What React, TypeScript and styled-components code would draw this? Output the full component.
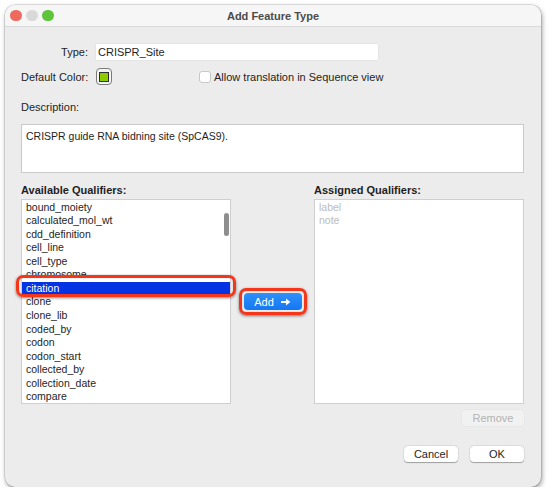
import styled, { createGlobalStyle, css } from "styled-components";

const GlobalStyle = createGlobalStyle`
  html, body {
    margin: 0;
    padding: 0;
    background: #ffffff;
  }
  body {
    font-family: "Liberation Sans", Arial, sans-serif;
    font-size: 11px;
    color: #1e1e1e;
  }
`;

const availableQualifiers = [
  "bound_moiety",
  "calculated_mol_wt",
  "cdd_definition",
  "cell_line",
  "cell_type",
  "chromosome",
  "citation",
  "clone",
  "clone_lib",
  "coded_by",
  "codon",
  "codon_start",
  "collected_by",
  "collection_date",
  "compare",
];

const assignedQualifiers = ["label", "note"];

const SELECTED = "citation";

export default function App() {
  return (
    <Page>
      <GlobalStyle />
      <Window>
        <TitleBar>
          <Lights>
            <Light $color="#ee6a5e" />
            <Light $color="#d9d9d9" />
            <Light $color="#5ec43a" />
          </Lights>
          <Title>Add Feature Type</Title>
          <span />
        </TitleBar>

        <Body>
          <FormRow>
            <FieldLabel>Type:</FieldLabel>
            <TypeField>CRISPR_Site</TypeField>
          </FormRow>

          <FormRow $gap={8}>
            <FieldLabel>Default Color:</FieldLabel>
            <ColorWell>
              <Swatch $color="#8ccc00" />
            </ColorWell>
            <CheckOption>
              <CheckBox />
              <span>Allow translation in Sequence view</span>
            </CheckOption>
          </FormRow>

          <SectionLabel $top={16}>Description:</SectionLabel>
          <DescriptionBox>CRISPR guide RNA bidning site (SpCAS9).</DescriptionBox>

          <QualifierGrid>
            <SectionLabel $bold>Available Qualifiers:</SectionLabel>
            <span />
            <SectionLabel $bold>Assigned Qualifiers:</SectionLabel>

            <ListBox>
              {availableQualifiers.map((q) => (
                <ListRow key={q} $selected={q === SELECTED}>
                  {q}
                </ListRow>
              ))}
              <ScrollThumb />
            </ListBox>

            <MiddleColumn>
              <AddButton>
                Add
                <svg width="10" height="8" viewBox="0 0 10 8">
                  <path d="M0 3.1h5.6v1.8H0z M5 0.4 L9.4 4 L5 7.6z" fill="#ffffff" />
                </svg>
              </AddButton>
            </MiddleColumn>

            <ListBox>
              {assignedQualifiers.map((q) => (
                <ListRow key={q} $muted>
                  {q}
                </ListRow>
              ))}
            </ListBox>
          </QualifierGrid>

          <ButtonRow $top={6}>
            <DialogButton $disabled $width={62}>
              Remove
            </DialogButton>
          </ButtonRow>

          <ButtonRow $top={20}>
            <DialogButton $width={54}>Cancel</DialogButton>
            <DialogButton $width={54}>OK</DialogButton>
          </ButtonRow>
        </Body>
      </Window>
    </Page>
  );
}

// red highlight frame drawn around the parts the dialog points out
const callout = css`
  &::after {
    content: "";
    position: absolute;
    border: 3px solid #f4361b;
    border-radius: 7px;
    box-shadow: 0 1px 3px rgba(0, 0, 0, 0.5), inset 0 0 1px rgba(0, 0, 0, 0.35);
    pointer-events: none;
  }
`;

const Page = styled.div`
  padding: 5px 0 0 5px;
`;

const Window = styled.div`
  width: 536px;
  height: 482px;
  background: #ececec;
  border-radius: 10px;
  box-shadow: 0 0 0 0.5px rgba(0, 0, 0, 0.2), 1px 2px 5px rgba(0, 0, 0, 0.4);
  display: flex;
  flex-direction: column;
`;

const TitleBar = styled.div`
  height: 21px;
  border-bottom: 1px solid #d9d9d9;
  background: #f6f6f6;
  border-radius: 10px 10px 0 0;
  display: grid;
  grid-template-columns: 1fr auto 1fr;
  align-items: center;
`;

const Lights = styled.div`
  display: flex;
  gap: 4.5px;
  padding-left: 5px;
`;

const Light = styled.span<{ $color: string }>`
  width: 11.5px;
  height: 11.5px;
  border-radius: 50%;
  background: ${(p) => p.$color};
`;

const Title = styled.div`
  font-weight: bold;
  font-size: 11px;
  color: #4b4b4b;
`;

const Body = styled.div`
  flex: 1;
  display: flex;
  flex-direction: column;
  padding: 17px 17px 0 16px;
`;

const FormRow = styled.div<{ $gap?: number }>`
  display: flex;
  align-items: center;
  gap: 8px;
  margin-top: ${(p) => p.$gap ?? 0}px;
`;

const FieldLabel = styled.div`
  width: 67px;
  text-align: right;
  white-space: nowrap;
`;

const TypeField = styled.div`
  width: 282px;
  height: 16px;
  box-sizing: border-box;
  padding: 0 2px;
  background: #ffffff;
  display: flex;
  align-items: center;
  box-shadow: 0 0 0 0.5px rgba(0, 0, 0, 0.06);
`;

const ColorWell = styled.div`
  width: 16px;
  height: 17px;
  box-sizing: border-box;
  border: 1px solid #7b7b7b;
  border-radius: 4px;
  background: #f4f4f4;
  display: flex;
  align-items: center;
  justify-content: center;
`;

const Swatch = styled.div<{ $color: string }>`
  width: 10px;
  height: 10px;
  box-sizing: border-box;
  border: 1px solid #2e2e2e;
  background: ${(p) => p.$color};
`;

const CheckOption = styled.label`
  display: flex;
  align-items: center;
  gap: 3px;
  margin-left: 79px;
`;

const CheckBox = styled.span`
  width: 12px;
  height: 12px;
  box-sizing: border-box;
  border: 1px solid #c8c8c8;
  border-radius: 3px;
  background: #ffffff;
`;

const SectionLabel = styled.div<{ $bold?: boolean; $top?: number }>`
  line-height: 13px;
  margin-top: ${(p) => p.$top ?? 0}px;
  font-weight: ${(p) => (p.$bold ? "bold" : "normal")};
`;

const DescriptionBox = styled.div`
  margin-top: 10px;
  height: 49px;
  box-sizing: border-box;
  padding: 5px 4px;
  font-size: 10.5px;
  line-height: 13px;
  background: #ffffff;
  border: 1px solid #cacaca;
`;

const QualifierGrid = styled.div`
  margin-top: 11px;
  display: grid;
  grid-template-columns: 210px 83px 210px;
  grid-template-rows: 13px 205px;
  row-gap: 2px;
`;

const ListBox = styled.div`
  position: relative;
  box-sizing: border-box;
  padding-top: 0.5px;
  background: #ffffff;
  border: 1px solid #cfcfcf;
`;

const ListRow = styled.div<{ $selected?: boolean; $muted?: boolean }>`
  height: 13.57px;
  line-height: 13.57px;
  padding-left: 4px;
  font-size: 10.5px;
  white-space: nowrap;
  color: ${(p) => (p.$muted ? "#bcbcbc" : "#1e1e1e")};

  ${(p) =>
    p.$selected &&
    css`
      position: relative;
      z-index: 1;
      background: #0433e4;
      color: #ffffff;
      ${callout}
      &::after {
        top: -7px;
        right: -6px;
        bottom: -2px;
        left: -6px;
      }
    `}
`;

const ScrollThumb = styled.div`
  position: absolute;
  top: 13px;
  right: 1.5px;
  width: 4.5px;
  height: 23px;
  border-radius: 3px;
  background: #8e8e8e;
`;

const MiddleColumn = styled.div`
  display: flex;
  align-items: center;
  justify-content: center;
`;

const AddButton = styled.button`
  position: relative;
  width: 58px;
  height: 17px;
  padding: 0;
  border: none;
  border-radius: 4px;
  background: linear-gradient(#3190f8, #1477f3);
  color: #ffffff;
  font-family: inherit;
  font-size: 11px;
  display: flex;
  align-items: center;
  justify-content: center;
  gap: 7px;
  ${callout}
  &::after {
    inset: -5px;
  }
`;

const ButtonRow = styled.div<{ $top: number }>`
  display: flex;
  justify-content: flex-end;
  gap: 12px;
  margin-top: ${(p) => p.$top}px;
`;

const DialogButton = styled.button<{ $disabled?: boolean; $width: number }>`
  width: ${(p) => p.$width}px;
  height: 16px;
  padding: 0;
  border: none;
  border-radius: 4px;
  font-family: inherit;
  font-size: 11px;
  background: ${(p) => (p.$disabled ? "#f1f1f1" : "#ffffff")};
  color: ${(p) => (p.$disabled ? "#b3b3b3" : "#1e1e1e")};
  box-shadow: ${(p) =>
    p.$disabled
      ? "0 0 0 0.5px rgba(0, 0, 0, 0.04)"
      : "0 0.5px 1px rgba(0, 0, 0, 0.3), 0 0 0 0.5px rgba(0, 0, 0, 0.08)"};
`;
